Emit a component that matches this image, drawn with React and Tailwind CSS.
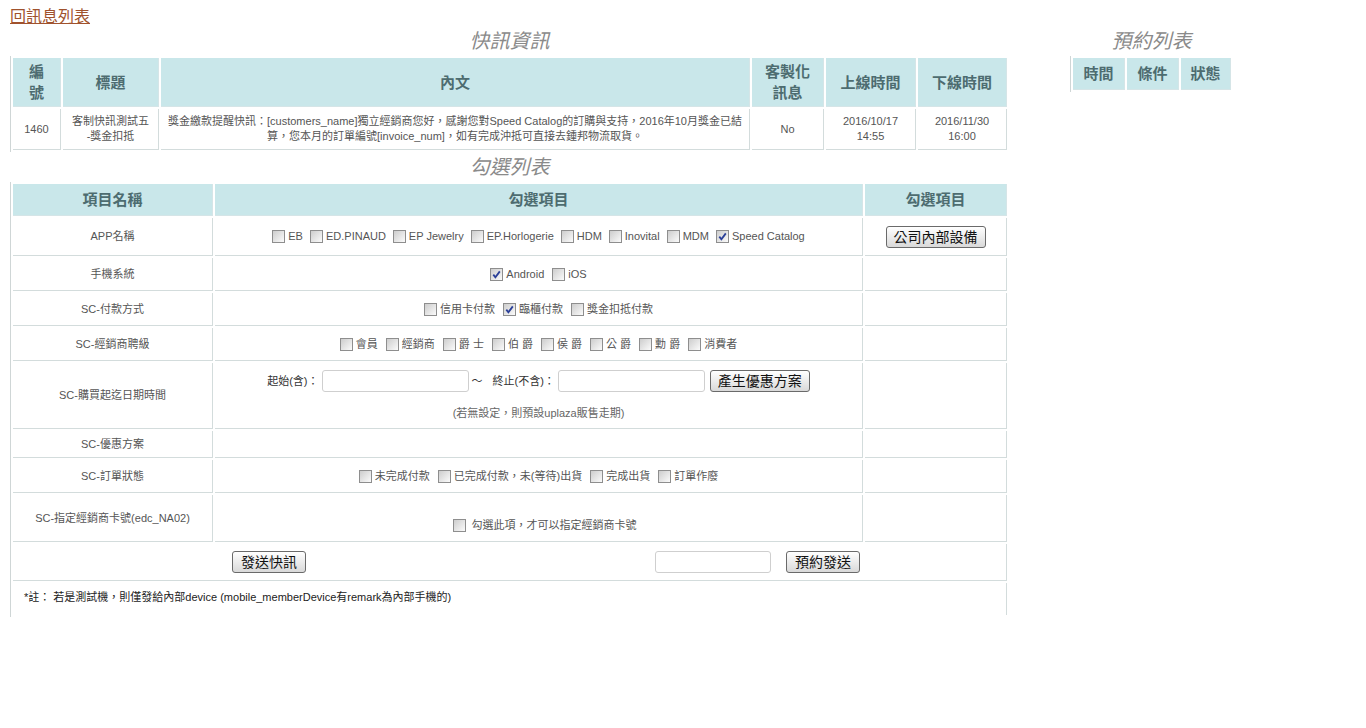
import React from 'react';

// 快訊發送頁 — 快訊資訊 / 勾選列表 / 預約列表

const TH = "bg-[#c9e7ea] border-r border-b border-[#d5e5e7] text-[15px] font-bold text-[#4d6c70] text-center align-middle p-0 leading-[21px]";
const TD = "bg-white border-r border-b border-[#d3dcdc] text-[11px] text-[#555] text-center align-middle p-0 leading-[15px]";

function Box({ checked }) {
  return (
    <span className="relative inline-block w-[13px] h-[13px] shrink-0 border border-[#8e8e8e] bg-linear-to-br from-[#cdcdcd] to-[#fbfbfb]">
      {checked && (
        <svg viewBox="0 0 11 11" className="absolute inset-0 w-[11px] h-[11px]">
          <path d="M2.3 5.6 L4.4 8.2 L8.8 2.4" fill="none" stroke="#2a3f98" strokeWidth="1.8" />
        </svg>
      )}
    </span>
  );
}

function Opt({ label, checked }) {
  return (
    <span className="inline-flex items-center gap-[3px]">
      <Box checked={checked} />
      <span className="whitespace-nowrap">{label}</span>
    </span>
  );
}

function Opts({ items, gap = 'gap-x-[8px]' }) {
  return (
    <div className={`flex justify-center items-center ${gap}`}>
      {items.map(([label, checked]) => (
        <Opt key={label} label={label} checked={checked} />
      ))}
    </div>
  );
}

function Btn({ children, className = '' }) {
  return (
    <button className={`h-[22px] border border-[#6a6a6a] rounded-[3px] bg-linear-to-b from-[#ffffff] to-[#d9d9d9] text-[14px] leading-none text-[#111] ${className}`}>
      {children}
    </button>
  );
}

function Field({ className = '' }) {
  return <input className={`h-[22px] border border-[#cfcfcf] rounded-[3px] bg-white ${className}`} />;
}

function Title({ children }) {
  return (
    <div className="h-[30px] flex items-center justify-center text-[20px] italic text-[#8a8a8a] leading-none">
      {children}
    </div>
  );
}

export default function App() {
  return (
    <div className="min-h-[728px] bg-white pl-[10px] pt-[6px] font-['Liberation_Sans','Noto_Sans_CJK_TC',sans-serif]">
      <div className="h-[20px] pt-[2px] leading-[18px]">
        <a href="#" className="text-[16px] text-[#a0522d] underline">回訊息列表</a>
      </div>

      <div className="flex items-start">
        {/* 左側 */}
        <div className="w-[999px]">
          <Title>快訊資訊</Title>
          <table className="w-[999px] table-fixed border-separate border-spacing-[2px] border-l border-[#cfd6d6]">
            <thead>
              <tr className="h-[49px]">
                <th className={`${TH} w-[48px]`}>編<br />號</th>
                <th className={`${TH} w-[96px]`}>標題</th>
                <th className={`${TH} w-[589px]`}>內文</th>
                <th className={`${TH} w-[72px]`}>客製化<br />訊息</th>
                <th className={`${TH} w-[90px]`}>上線時間</th>
                <th className={`${TH} w-[89px]`}>下線時間</th>
              </tr>
            </thead>
            <tbody>
              <tr className="h-[41px]">
                <td className={TD}>1460</td>
                <td className={TD}>客制快訊測試五<br />-獎金扣抵</td>
                <td className={`${TD} whitespace-nowrap`}>
                  獎金繳款提醒快訊：[customers_name]獨立經銷商您好，感謝您對Speed Catalog的訂購與支持，2016年10月獎金已結<br />
                  算，您本月的訂單編號[invoice_num]，如有完成沖抵可直接去鍾邦物流取貨。
                </td>
                <td className={TD}>No</td>
                <td className={TD}>2016/10/17<br />14:55</td>
                <td className={TD}>2016/11/30<br />16:00</td>
              </tr>
            </tbody>
          </table>

          <Title>勾選列表</Title>
          <table className="w-[999px] table-fixed border-separate border-spacing-[2px] border-l border-[#cfd6d6]">
            <thead>
              <tr className="h-[32px]">
                <th className={`${TH} w-[200px]`}>項目名稱</th>
                <th className={`${TH} w-[648px]`}>勾選項目</th>
                <th className={`${TH} w-[142px]`}>勾選項目</th>
              </tr>
            </thead>
            <tbody>
              <tr className="h-[38px]">
                <td className={TD}>APP名稱</td>
                <td className={`${TD} text-[10.5px]`}>
                  <Opts gap="gap-x-[7px]" items={[['EB'], ['ED.PINAUD'], ['EP Jewelry'], ['EP.Horlogerie'], ['HDM'], ['Inovital'], ['MDM'], ['Speed Catalog', true]]} />
                </td>
                <td className={TD}>
                  <Btn className="w-[100px]">公司內部設備</Btn>
                </td>
              </tr>
              <tr className="h-[33px]">
                <td className={TD}>手機系統</td>
                <td className={TD}>
                  <Opts items={[['Android', true], ['iOS']]} />
                </td>
                <td className={TD}></td>
              </tr>
              <tr className="h-[33px]">
                <td className={TD}>SC-付款方式</td>
                <td className={TD}>
                  <Opts items={[['信用卡付款'], ['臨櫃付款', true], ['獎金扣抵付款']]} />
                </td>
                <td className={TD}></td>
              </tr>
              <tr className="h-[33px]">
                <td className={TD}>SC-經銷商聘級</td>
                <td className={TD}>
                  <Opts items={[['會員'], ['經銷商'], ['爵 士'], ['伯 爵'], ['侯 爵'], ['公 爵'], ['勳 爵'], ['消費者']]} />
                </td>
                <td className={TD}></td>
              </tr>
              <tr className="h-[66px]">
                <td className={TD}>SC-購買起迄日期時間</td>
                <td className={TD}>
                  <div className="flex justify-center items-center text-[#333]">
                    <span>起始(含)：</span>
                    <Field className="w-[147px] ml-[3px]" />
                    <span className="ml-[3px] mr-[10px]">～</span>
                    <span>終止(不含)：</span>
                    <Field className="w-[147px] ml-[3px]" />
                    <Btn className="w-[100px] ml-[5px]">產生優惠方案</Btn>
                  </div>
                  <div className="mt-[14px] text-[#666]">(若無設定，則預設uplaza販售走期)</div>
                </td>
                <td className={TD}></td>
              </tr>
              <tr className="h-[27px]">
                <td className={TD}>SC-優惠方案</td>
                <td className={TD}></td>
                <td className={TD}></td>
              </tr>
              <tr className="h-[33px]">
                <td className={TD}>SC-訂單狀態</td>
                <td className={TD}>
                  <Opts items={[['未完成付款'], ['已完成付款，未(等待)出貨'], ['完成出貨'], ['訂單作廢']]} />
                </td>
                <td className={TD}></td>
              </tr>
              <tr className="h-[47px]">
                <td className={TD}>SC-指定經銷商卡號(edc_NA02)</td>
                <td className={TD}>
                  <div className="pt-[14px] flex justify-center items-center gap-[6px] pl-[12px]">
                    <Box />
                    <span>勾選此項，才可以指定經銷商卡號</span>
                  </div>
                </td>
                <td className={TD}></td>
              </tr>
              <tr className="h-[37px]">
                <td colSpan={3} className={TD}>
                  <div className="flex items-center">
                    <div className="w-[512px] flex justify-center">
                      <Btn className="w-[74px]">發送快訊</Btn>
                    </div>
                    <div className="flex items-center pl-[130px]">
                      <Field className="w-[116px]" />
                      <Btn className="w-[74px] ml-[15px]">預約發送</Btn>
                    </div>
                  </div>
                </td>
              </tr>
              <tr className="h-[32px]">
                <td colSpan={3} className="bg-white border-r border-[#d3dcdc] text-[11px] text-[#222] text-left align-middle pl-[11px] pb-[4px]">
                  *註： 若是測試機，則僅發給內部device (mobile_memberDevice有remark為內部手機的)
                </td>
              </tr>
            </tbody>
          </table>
        </div>

        {/* 右側 */}
        <div className="ml-[61px] w-[163px]">
          <Title>預約列表</Title>
          <table className="w-[163px] table-fixed border-separate border-spacing-[2px] border-l border-[#cfd6d6]">
            <thead>
              <tr className="h-[32px]">
                <th className={`${TH} w-[52px]`}>時間</th>
                <th className={`${TH} w-[52px]`}>條件</th>
                <th className={`${TH} w-[50px]`}>狀態</th>
              </tr>
            </thead>
          </table>
        </div>
      </div>
    </div>
  );
}
